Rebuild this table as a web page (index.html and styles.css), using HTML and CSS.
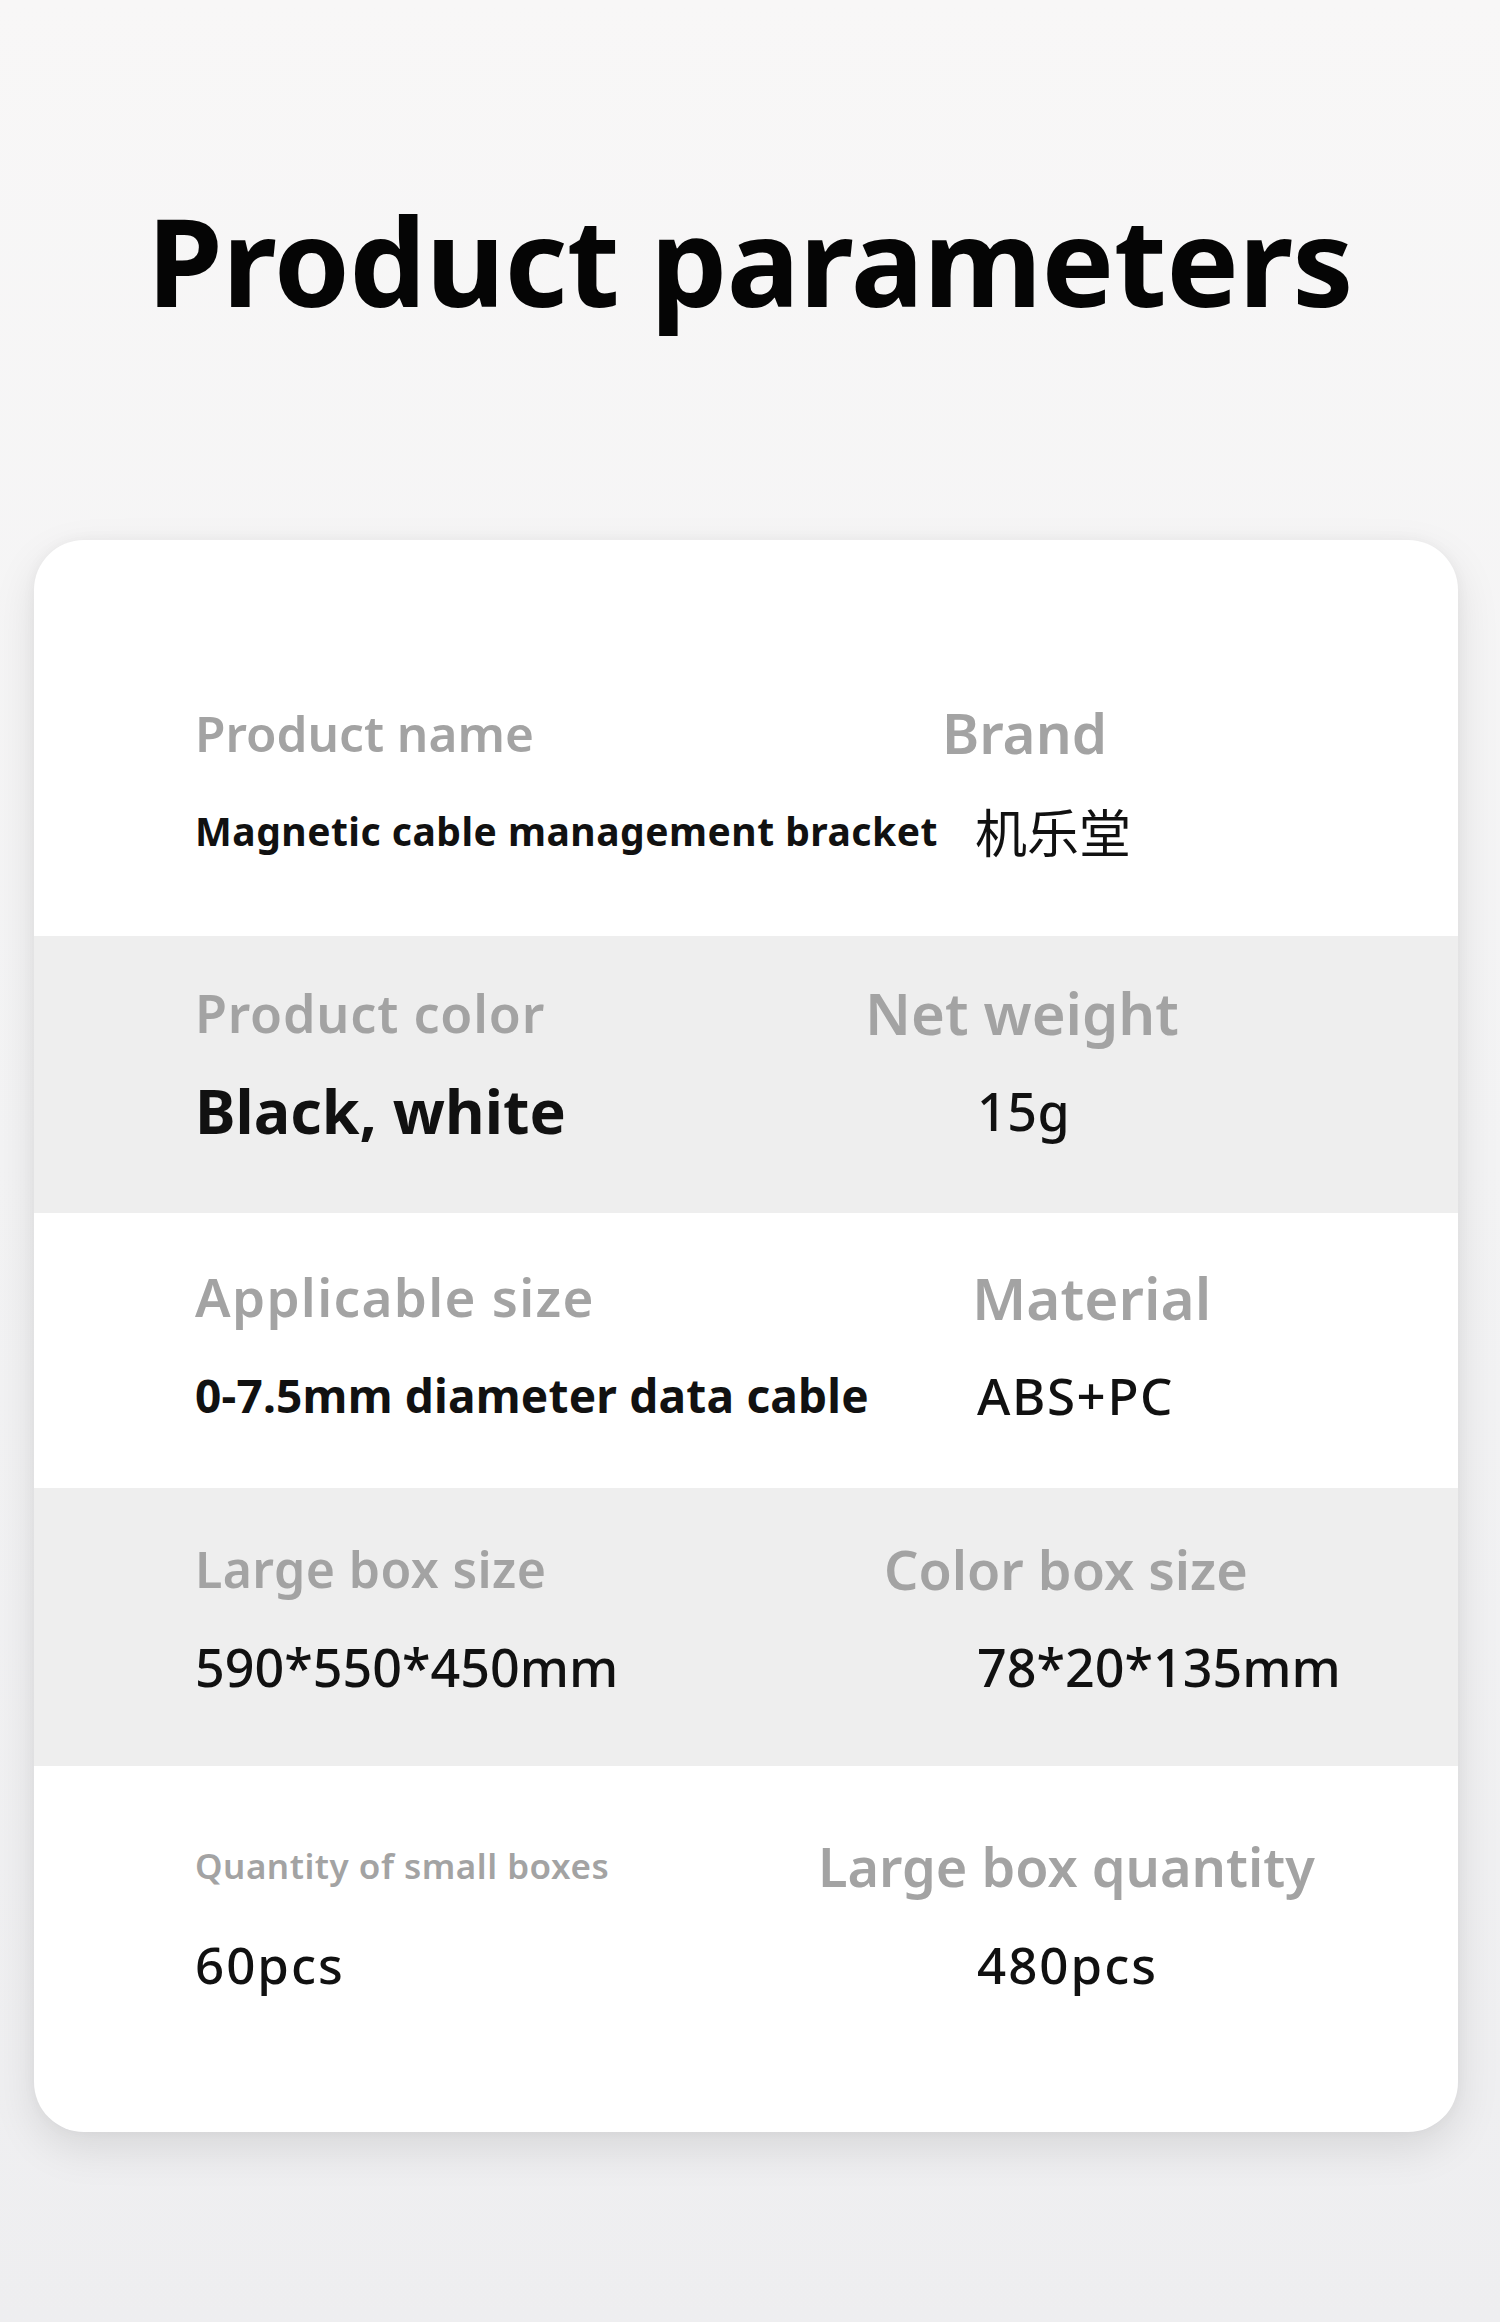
FILE: index.html
```html
<!DOCTYPE html>
<html lang="en">
<head>
<meta charset="utf-8">
<title>Product parameters</title>
<link rel="stylesheet" href="styles.css">
</head>
<body>
<main class="page">
  <h1 class="title">Product parameters</h1>
  <section class="card">
    <div class="row row-1">
      <div class="label l-name">Product name</div>
      <div class="label l-brand">Brand</div>
      <div class="value v-name">Magnetic cable management bracket</div>
      <div class="value v-brand">机乐堂</div>
    </div>
    <div class="row row-2 alt">
      <div class="label l-color">Product color</div>
      <div class="label l-weight">Net weight</div>
      <div class="value v-color">Black, white</div>
      <div class="value v-weight">15g</div>
    </div>
    <div class="row row-3">
      <div class="label l-size">Applicable size</div>
      <div class="label l-material">Material</div>
      <div class="value v-size">0-7.5mm diameter data cable</div>
      <div class="value v-material">ABS+PC</div>
    </div>
    <div class="row row-4 alt">
      <div class="label l-largebox">Large box size</div>
      <div class="label l-colorbox">Color box size</div>
      <div class="value v-dim">590*550*450mm</div>
      <div class="value v-dim">78*20*135mm</div>
    </div>
    <div class="row row-5">
      <div class="label l-smallqty">Quantity of small boxes</div>
      <div class="label l-largeqty">Large box quantity</div>
      <div class="value v-pcs">60pcs</div>
      <div class="value v-pcs">480pcs</div>
    </div>
  </section>
</main>
</body>
</html>
```

FILE: styles.css
```css
* { box-sizing: border-box; }

html, body {
  margin: 0;
  padding: 0;
}

body {
  width: 1500px;
  min-height: 2322px;
  background: linear-gradient(180deg, #f8f7f7 0%, #f3f3f4 50%, #eeeef0 100%);
  font-family: "Noto Sans", "Open Sans", "Noto Sans CJK SC", sans-serif;
  color: #111;
}

.page {
  padding-top: 175px;
  padding-bottom: 190px;
}

.title {
  margin: 0;
  text-align: center;
  font-size: 122px;
  font-weight: 700;
  line-height: 170px;
  color: #050505;
  letter-spacing: -0.6px;
}

.card {
  margin: 195px 42px 0 34px;
  background: #ffffff;
  border-radius: 50px;
  overflow: hidden;
  box-shadow: 0 16px 44px rgba(0, 0, 0, 0.10), 0 0 14px rgba(0, 0, 0, 0.04);
}

.row {
  display: grid;
  grid-template-columns: 782px 1fr;
  grid-template-rows: 98px 98px;
  align-items: center;
  padding-left: 161px;
}

.alt { background: #eeeeee; }

.row-1 { height: 396px; padding-top: 144px; }
.row-2 { height: 277px; padding-top: 28px; }
.row-3 { height: 275px; padding-top: 35px; }
.row-4 { height: 278px; padding-top: 32px; }
.row-5 { height: 366px; padding-top: 51px; }

.label {
  color: #a3a3a3;
  font-weight: 600;
  white-space: nowrap;
  line-height: 98px;
}

.value {
  color: #111111;
  white-space: nowrap;
  line-height: 98px;
}

/* labels */
.l-name { font-size: 49.5px; }
.l-brand { font-size: 56.5px; margin-left: -35px; }
.l-color { font-size: 52px; letter-spacing: 0.8px; }
.l-weight { font-size: 58px; margin-left: -112px; }
.l-size { font-size: 53px; letter-spacing: 1.3px; }
.l-material { font-size: 58.5px; margin-left: -5px; }
.l-largebox { font-size: 50px; letter-spacing: 0.4px; }
.l-colorbox { font-size: 54px; margin-left: -93px; }
.l-smallqty { font-size: 35px; letter-spacing: 0.5px; }
.l-largeqty { font-size: 54px; margin-left: -159px; }

/* values */
.v-name { font-size: 39px; font-weight: 700; letter-spacing: 0.5px; }
.v-brand {
  font-family: "Noto Sans CJK SC", sans-serif;
  font-weight: 400;
  font-size: 52px;
  margin-left: -2px;
}
.v-color { font-size: 61px; font-weight: 700; }
.v-weight { font-size: 52px; font-weight: 500; letter-spacing: 0.5px; }
.v-size { font-size: 46px; font-weight: 700; letter-spacing: 0.2px; }
.v-material { font-size: 51px; font-weight: 500; letter-spacing: 1.6px; }
.v-dim { font-size: 52px; font-weight: 500; }
.v-pcs { font-size: 51px; font-weight: 500; letter-spacing: 2px; }
```
